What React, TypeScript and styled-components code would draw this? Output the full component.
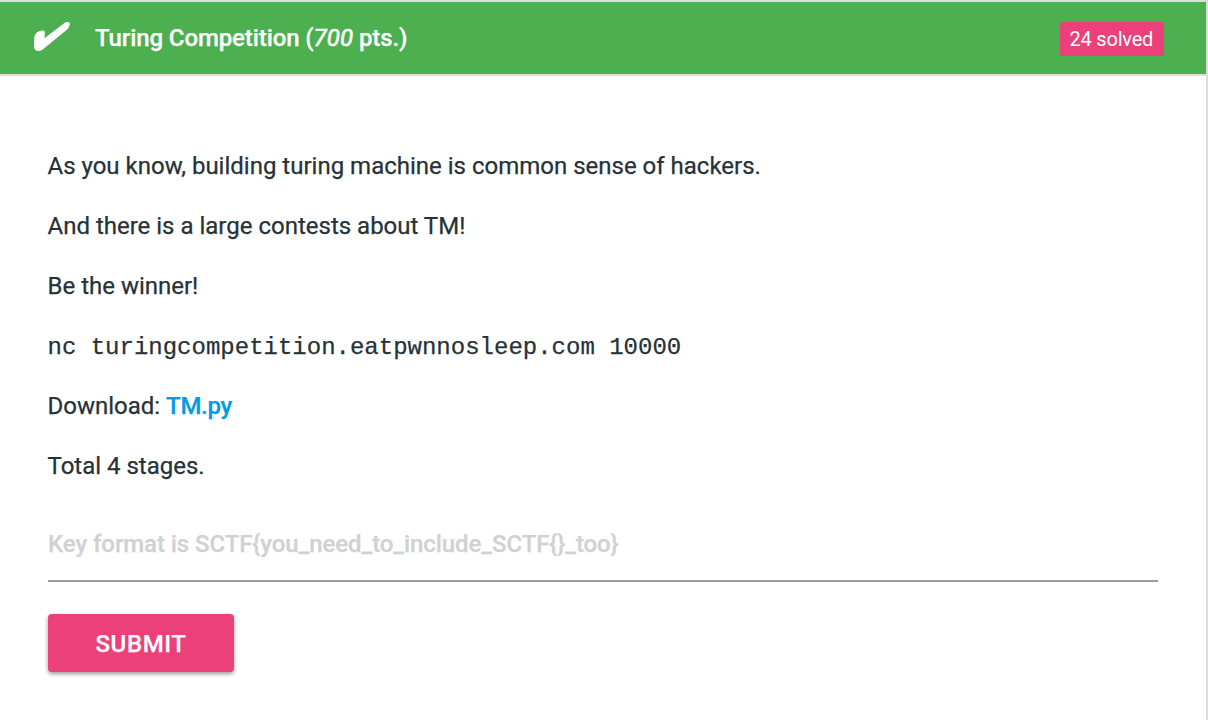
import React from 'react';
import styled, { createGlobalStyle } from 'styled-components';

const Global = createGlobalStyle`
  * { box-sizing: border-box; }
  body { margin: 0; background: #fff; overflow: hidden; }
`;
const Page = styled.main`
  width: 1208px; height: 720px; overflow: hidden;
  border-right: 2px solid #ddd;
  font-family: Roboto, sans-serif; font-size: 24px; color: #263238;
  -webkit-text-stroke: 0.25px currentColor;
`;
const Header = styled.header`
  height: 76px; padding: 0 42px 0 34px;
  display: flex; align-items: center;
  background: #4caf50; color: #fff;
  border-top: 2px solid #ddd; border-bottom: 2px solid #ddd;
`;
const Check = styled.svg`
  width: 36px; height: 32px; margin-right: 25px; flex: none;
`;
const Title = styled.h1`
  margin: 0; flex: 1; font-size: 24px; line-height: 36px; font-weight: 500;
  letter-spacing: -0.1px;
`;
const Points = styled.em`
  font-weight: 400; letter-spacing: 0.1px;
  -webkit-text-stroke: 0.6px currentColor;
`;
const Badge = styled.span`
  width: 104px; height: 34px; margin-top: 2px; padding-left: 9.5px; border-radius: 3px;
  background: #ec407a; font-size: 20px; line-height: 34px; letter-spacing: -0.2px;
  -webkit-text-stroke: 0;
`;
const Body = styled.section`
  padding: 72px 48px 0;
`;
const Line = styled.p`
  margin: 0 0 24px -0.5px; height: 36px; line-height: 36px; white-space: nowrap;
`;
const Code = styled.code`
  font-family: Courier, "Liberation Mono", monospace; font-size: 24px;
`;
const FileLink = styled.a`
  color: #039be5; font-weight: 500; letter-spacing: -0.3px; text-decoration: none;
`;
const KeyInput = styled.input`
  display: block; width: 1110px; height: 76px; margin: -2px 0 32px; padding: 2px 0 0;
  border: 0; border-bottom: 2px solid #9e9e9e; outline: 0; background: none;
  font: 500 24px Roboto, sans-serif; letter-spacing: -0.08px;
  -webkit-text-stroke: inherit;
  &::placeholder { color: #d1d1d1; opacity: 1; -webkit-text-stroke: 0.25px #d1d1d1; }
`;
const Submit = styled.button`
  width: 186px; height: 58px; padding: 1px 0 0; border: 0; border-radius: 4px;
  background: #ec407a; color: #fff; font: 500 24px Roboto, sans-serif;
  letter-spacing: 0.6px; -webkit-text-stroke: 0.25px #fff;
  box-shadow: 0 2px 4px rgba(0,0,0,.4);
`;

export default function App() {
  return (
    <Page>
      <Global />
      <Header>
        <Check viewBox="0 0 36 32"><path fill="#fff" d="M0 24C0 18 .2 14.5 1.5 12C3 9.5 6.5 8.2 9.3 8.4C10.8 8.7 11.1 10 10.8 12L10.4 16.2L29.8 1.5C32 0 34.5 -.3 35.5 .7C36.5 2.2 35 5.5 32.8 7.7L9 27.3C6.8 29 5 29.4 3 28.8C.8 28.2 0 26.5 0 24Z" /></Check>
        <Title>Turing Competition (<Points>700</Points> pts.)</Title>
        <Badge>24 solved</Badge>
      </Header>
      <Body>
        <Line>As you know, building turing machine is common sense of hackers.</Line>
        <Line>And there is a large contests about TM!</Line>
        <Line>Be the winner!</Line>
        <Line><Code>nc turingcompetition.eatpwnnosleep.com 10000</Code></Line>
        <Line>Download: <FileLink>TM.py</FileLink></Line>
        <Line>Total 4 stages.</Line>
        <KeyInput placeholder="Key format is SCTF{you_need_to_include_SCTF{}_too}" />
        <Submit>SUBMIT</Submit>
      </Body>
    </Page>
  );
}
